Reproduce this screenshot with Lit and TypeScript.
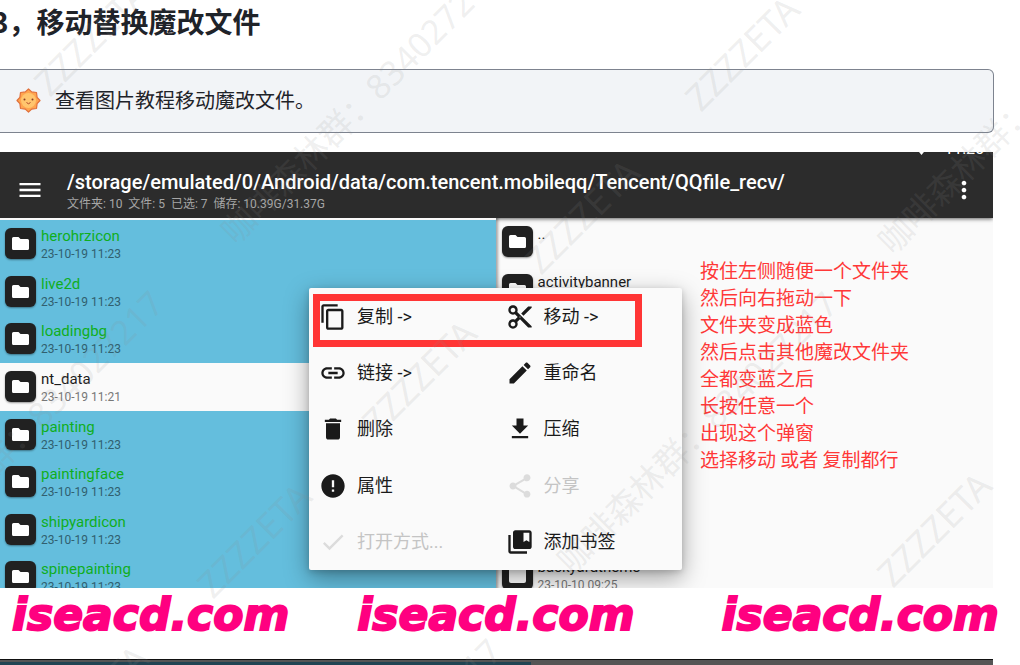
import { LitElement, html, css, svg } from "lit";
import { customElement, property } from "lit/decorators.js";

const ICONS: Record<string, string> = {
  menu: "M3 18h18v-2H3v2zm0-5h18v-2H3v2zm0-7v2h18V6H3z",
  more: "M12 8c1.1 0 2-.9 2-2s-.9-2-2-2-2 .9-2 2 .9 2 2 2zm0 2c-1.1 0-2 .9-2 2s.9 2 2 2 2-.9 2-2-.9-2-2-2zm0 6c-1.1 0-2 .9-2 2s.9 2 2 2 2-.9 2-2-.9-2-2-2z",
  copy: "M16 1H4c-1.1 0-2 .9-2 2v14h2V3h12V1zm3 4H8c-1.1 0-2 .9-2 2v14c0 1.1.9 2 2 2h11c1.1 0 2-.9 2-2V7c0-1.1-.9-2-2-2zm0 16H8V7h11v14z",
  cut: "M9.64 7.64c.23-.5.36-1.05.36-1.64 0-2.21-1.79-4-4-4S2 3.79 2 6s1.79 4 4 4c.59 0 1.14-.13 1.64-.36L10 12l-2.36 2.36C7.14 14.13 6.59 14 6 14c-2.21 0-4 1.79-4 4s1.79 4 4 4 4-1.79 4-4c0-.59-.13-1.14-.36-1.64L12 14l7 7h3v-1L9.64 7.64zM6 8c-1.1 0-2-.89-2-2s.9-2 2-2 2 .89 2 2-.9 2-2 2zm0 12c-1.1 0-2-.89-2-2s.9-2 2-2 2 .89 2 2-.9 2-2 2zm6-7.5c-.28 0-.5-.22-.5-.5s.22-.5.5-.5.5.22.5.5-.22.5-.5.5zM19 3l-6 6 2 2 7-7V3z",
  link: "M3.9 12c0-1.71 1.39-3.1 3.1-3.1h4V7H7c-2.76 0-5 2.24-5 5s2.24 5 5 5h4v-1.9H7c-1.71 0-3.1-1.39-3.1-3.1zM8 13h8v-2H8v2zm9-6h-4v1.9h4c1.71 0 3.1 1.39 3.1 3.1s-1.39 3.1-3.1 3.1h-4V17h4c2.76 0 5-2.24 5-5s-2.24-5-5-5z",
  edit: "M3 17.25V21h3.75L17.81 9.94l-3.75-3.75L3 17.25zM20.71 7.04c.39-.39.39-1.02 0-1.41l-2.34-2.34c-.39-.39-1.02-.39-1.41 0l-1.83 1.83 3.75 3.75 1.83-1.83z",
  trash: "M6 19c0 1.1.9 2 2 2h8c1.1 0 2-.9 2-2V7H6v12zM19 4h-3.5l-1-1h-5l-1 1H5v2h14V4z",
  down: "M19 9h-4V3H9v6H5l7 7 7-7zM5 18v2h14v-2H5z",
  info: "M12 2C6.48 2 2 6.48 2 12s4.48 10 10 10 10-4.48 10-10S17.52 2 12 2zm1 15h-2v-2h2v2zm0-4h-2V7h2v6z",
  share: "M18 16.08c-.76 0-1.44.3-1.96.77L8.91 12.7c.05-.23.09-.46.09-.7s-.04-.47-.09-.7l7.05-4.11c.54.5 1.25.81 2.04.81 1.66 0 3-1.34 3-3s-1.34-3-3-3-3 1.34-3 3c0 .24.04.47.09.7L8.04 9.81C7.5 9.31 6.79 9 6 9c-1.66 0-3 1.34-3 3s1.34 3 3 3c.79 0 1.5-.31 2.04-.81l7.12 4.16c-.05.21-.08.43-.08.65 0 1.61 1.31 2.92 2.92 2.92 1.61 0 2.92-1.31 2.92-2.92s-1.31-2.92-2.92-2.92z",
  check: "M9 16.17L4.83 12l-1.42 1.41L9 19 21 7l-1.41-1.41z",
  bookmark: "M4 6H2v14c0 1.1.9 2 2 2h14v-2H4V6zM20 2H8c-1.1 0-2 .9-2 2v12c0 1.1.9 2 2 2h12c1.1 0 2-.9 2-2V4c0-1.1-.9-2-2-2zm0 10l-2.5-1.5L15 12V4h5v8z",
};

const icon = (name: string) => html`
  <svg class="icon" viewBox="0 0 24 24" aria-hidden="true"><path d=${ICONS[name]}></path></svg>
`;

interface Entry {
  name: string;
  date?: string;
  selected?: boolean;
}

const LEFT: Entry[] = [
  { name: "herohrzicon", date: "23-10-19 11:23", selected: true },
  { name: "live2d", date: "23-10-19 11:23", selected: true },
  { name: "loadingbg", date: "23-10-19 11:23", selected: true },
  { name: "nt_data", date: "23-10-19 11:21" },
  { name: "painting", date: "23-10-19 11:23", selected: true },
  { name: "paintingface", date: "23-10-19 11:23", selected: true },
  { name: "shipyardicon", date: "23-10-19 11:23", selected: true },
  { name: "spinepainting", date: "23-10-19 11:23", selected: true },
];

const ACTIONS = [
  { icon: "copy", label: "复制 ->" },
  { icon: "cut", label: "移动 ->" },
  { icon: "link", label: "链接 ->" },
  { icon: "edit", label: "重命名" },
  { icon: "trash", label: "删除" },
  { icon: "down", label: "压缩" },
  { icon: "info", label: "属性" },
  { icon: "share", label: "分享", off: true },
  { icon: "check", label: "打开方式...", off: true },
  { icon: "bookmark", label: "添加书签" },
];

const STEPS = [
  "按住左侧随便一个文件夹",
  "然后向右拖动一下",
  "文件夹变成蓝色",
  "然后点击其他魔改文件夹",
  "全都变蓝之后",
  "长按任意一个",
  "出现这个弹窗",
  "选择移动 或者 复制都行",
];

const NAME_MARKS = [
  [50, 98],
  [701, 113],
  [541, 276],
  [378, 437],
  [213, 600],
  [893, 589],
  [50, 762],
];
const GROUP_MARKS = [
  [236, 246],
  [893, 256],
  [572, 575],
  [-102, 574],
  [236, 922],
];

@customElement("file-row")
export class FileRow extends LitElement {
  @property() name = "";
  @property() date = "";
  @property({ type: Boolean, reflect: true }) selected = false;
  @property() kind = "folder";

  static styles = css`
    :host {
      display: flex;
      gap: 5px;
      padding: 8px 5px 0;
      box-sizing: border-box;
      overflow: hidden;
      color: #1c1c1c;
      font-family: Roboto, "Noto Sans CJK SC", sans-serif;
    }
    :host([selected]) {
      background: #64bedd;
    }
    .tile {
      flex: none;
      width: 31px;
      height: 31px;
      border-radius: 6px;
      background: #212121;
      box-shadow: 0 1px 2px rgba(0, 0, 0, 0.4);
    }
    .text {
      display: flex;
      flex-direction: column;
    }
    .name {
      font-size: 15px;
      line-height: 16px;
    }
    .date {
      font-size: 12px;
      line-height: 20px;
      color: #777;
    }
    :host([selected]) .name {
      color: #0fae1e;
    }
    :host([selected]) .date {
      color: #31606f;
    }
  `;

  render() {
    return html`
      <svg class="tile" viewBox="0 0 31 31" aria-hidden="true">
        ${this.kind === "folder"
          ? svg`<path fill="#fff" d="M8.500 9H13.500L15.500 11H22.500Q24 11 24 12.500V20.500Q24 22 22.500 22H8.500Q7 22 7 20.500V10.500Q7 9 8.500 9Z"></path>`
          : svg`<rect fill="#fff" x="7" y="6" width="17" height="18" rx="2"></rect>`}
      </svg>
      <div class="text">
        <span class="name">${this.name}</span>
        ${this.date ? html`<span class="date">${this.date}</span>` : null}
      </div>
    `;
  }
}

@customElement("action-menu")
export class ActionMenu extends LitElement {
  static styles = css`
    :host {
      display: block;
      background: #fafafa;
      border-radius: 2px;
      box-shadow: 0 8px 24px rgba(0, 0, 0, 0.36), 0 2px 6px rgba(0, 0, 0, 0.16);
    }
    .grid {
      display: grid;
      grid-template-columns: 1fr 1fr;
      grid-template-rows: repeat(5, 1fr);
      height: 282px;
    }
    .action {
      display: flex;
      align-items: center;
      gap: 10px;
      padding: 1px 0 0 10px;
      border: 0;
      background: none;
      color: #1a1a1a;
      font: 18px/24px Roboto, "Noto Sans CJK SC", sans-serif;
      text-align: left;
    }
    .action:disabled {
      color: #c4c4c4;
    }
    .icon {
      flex: none;
      width: 28px;
      height: 28px;
      fill: currentColor;
    }
    .action:disabled .icon {
      color: #dcdcdc;
    }
    .frame {
      position: absolute;
      top: 6px;
      left: 4px;
      right: 40px;
      height: 53px;
      box-sizing: border-box;
      border: 7px solid #ff3535;
      pointer-events: none;
    }
  `;

  render() {
    return html`
      <div class="grid" role="menu">
        ${ACTIONS.map(
          (a) => html`
            <button class="action" role="menuitem" ?disabled=${a.off}>
              ${icon(a.icon)}<span>${a.label}</span>
            </button>
          `
        )}
      </div>
      <div class="frame"></div>
    `;
  }
}

@customElement("app-root")
export class AppRoot extends LitElement {
  static styles = css`
    :host {
      display: block;
      position: relative;
      height: 100vh;
      overflow: hidden;
      background: #fff;
      font-family: "Noto Sans CJK SC", sans-serif;
      color: #1f2329;
    }
    .article {
      margin-right: 26px;
    }
    .title {
      margin: 0 0 0 -8px;
      padding: 1px 0 28px;
      font-size: 28px;
      line-height: 40px;
      font-weight: 700;
    }
    .callout {
      display: flex;
      align-items: center;
      gap: 14px;
      box-sizing: border-box;
      padding: 15px 16px 17px;
      border: 1px solid #7d838f;
      border-left: 0;
      border-radius: 0 6px 6px 0;
      background: #f2f4f7;
      font-size: 20px;
      line-height: 30px;
    }
    .sun {
      flex: none;
      width: 25px;
      height: 25px;
    }
    .callout p {
      margin: 0;
    }
    .shot {
      position: relative;
      display: flex;
      flex-direction: column;
      height: 436px;
      margin: 19px 1px 0 0;
      overflow: hidden;
      background: #fafafa;
    }
    .status {
      display: flex;
      align-items: flex-end;
      justify-content: flex-end;
      gap: 16px;
      height: 5px;
      padding-right: 9px;
      overflow: hidden;
      color: #fff;
      font: 16px/16px Roboto, sans-serif;
    }
    .status svg {
      width: 13px;
      height: 10px;
      margin-bottom: 2px;
      fill: #fff;
    }
    .head {
      position: relative;
      background: #2c2c2c;
      box-shadow: 0 1px 4px rgba(0, 0, 0, 0.6);
    }
    .bar {
      display: flex;
      align-items: center;
      height: 61px;
      box-sizing: border-box;
      padding: 5px 15px 0 16px;
      color: #fff;
    }
    .path {
      flex: 1;
      padding: 2px 0 0 23px;
      font-family: Roboto, "Noto Sans CJK SC", sans-serif;
    }
    .path h2 {
      margin: 0;
      font-size: 20px;
      line-height: 26px;
      font-weight: 500;
    }
    .path p {
      margin: 0;
      font-size: 12px;
      line-height: 18px;
      color: #a6a6a6;
    }
    .tool {
      display: flex;
      padding: 0;
      border: 0;
      background: none;
      color: #fff;
    }
    .icon {
      width: 28px;
      height: 28px;
      fill: currentColor;
    }
    .panes {
      flex: 1;
      display: grid;
      grid-template-columns: calc(50% - 1px) 1fr;
      min-height: 0;
    }
    .pane {
      display: grid;
      grid-template-rows: repeat(8, 1fr);
      height: 381px;
    }
    .left {
      position: relative;
      padding-top: 2px;
      background: #fafafa;
    }
    .right {
      padding-left: 1px;
      box-shadow: inset 4px 0 3px -2px rgba(0, 0, 0, 0.35);
    }
    .last {
      grid-row: 8;
    }
    .menu {
      position: absolute;
      top: 136px;
      left: 309px;
      width: 373px;
    }
    .steps {
      position: absolute;
      top: 104px;
      left: 700px;
      margin: 0;
      padding: 0;
      list-style: none;
      color: #ff3838;
      font-size: 19px;
      line-height: 27px;
      white-space: nowrap;
    }
    .sites {
      display: flex;
      gap: 68px;
      height: 71px;
      padding-left: 12px;
      box-sizing: border-box;
    }
    .site {
      color: #ff0080;
      font: italic 700 44px/54px "DejaVu Sans", sans-serif;
      -webkit-text-stroke: 2px #ff0080;
      text-decoration: none;
      white-space: nowrap;
    }
    .site:last-child {
      margin-left: 19px;
    }
    .next {
      display: grid;
      grid-template-columns: 531px 1fr;
      height: 20px;
      margin-right: 1px;
      border-top: 1px solid #111;
      background: #555;
    }
    .next .dim {
      margin-top: 2px;
      background: #214453;
    }
    .marks {
      position: absolute;
      inset: 0;
      width: 100%;
      height: 100%;
      overflow: hidden;
      pointer-events: none;
      fill: rgba(140, 140, 140, 0.14);
      font: 34px "Noto Sans", "Noto Sans CJK SC", sans-serif;
    }
    .mark-name {
      font-size: 36px;
    }
  `;

  render() {
    return html`
      <main class="article">
        <h1 class="title">3，移动替换魔改文件</h1>
        <aside class="callout">
          <svg class="sun" viewBox="0 0 25 25" aria-hidden="true">
            <path
              d="M12.500 1L15.700 3.900L20.500 4.500L21.100 9.300L24 12.500L21.100 15.700L20.500 20.500L15.700 21.100L12.500 24L9.300 21.100L4.500 20.500L3.900 15.700L1 12.500L3.900 9.300L4.500 4.500L9.300 3.900Z"
              fill="#ffa44e" stroke="#e0703c" stroke-width="1.200" stroke-linejoin="round"
            ></path>
            <circle cx="12.500" cy="12.500" r="7.500" fill="#ffc56e"></circle>
            <circle cx="8.500" cy="11.500" r="1" fill="#8a3c24"></circle>
            <circle cx="16.500" cy="11.500" r="1" fill="#8a3c24"></circle>
            <path d="M10.500 14.500Q12.500 17 14.500 14.500" fill="none" stroke="#b1472b"></path>
          </svg>
          <p>查看图片教程移动魔改文件。</p>
        </aside>

        <section class="shot">
          <header class="head">
            <div class="status">
              <svg viewBox="0 0 13 10" aria-hidden="true"><path d="M0 2Q6.500 -2 13 2L6.500 10Z"></path></svg>
              <time>11:25</time>
            </div>
            <div class="bar">
              <button class="tool" aria-label="菜单">${icon("menu")}</button>
              <div class="path">
                <h2>/storage/emulated/0/Android/data/com.tencent.mobileqq/Tencent/QQfile_recv/</h2>
                <p>文件夹: 10&nbsp; 文件: 5&nbsp; 已选: 7&nbsp; 储存: 10.39G/31.37G</p>
              </div>
              <button class="tool" aria-label="更多">${icon("more")}</button>
            </div>
          </header>
          <div class="panes">
            <div class="pane left">
              ${LEFT.map(
                (e) => html`<file-row .name=${e.name} .date=${e.date ?? ""} ?selected=${e.selected}></file-row>`
              )}
            </div>
            <div class="pane right">
              <file-row name=".."></file-row>
              <file-row name="activitybanner"></file-row>
              <file-row class="last" name="backyardtheme" date="23-10-10 09:25" kind="file"></file-row>
            </div>
          </div>
          <ul class="steps">
            ${STEPS.map((s) => html`<li>${s}</li>`)}
          </ul>
          <action-menu class="menu"></action-menu>
        </section>

        <nav class="sites">
          ${[0, 1, 2].map(() => html`<a class="site" href="#">iseacd.com</a>`)}
        </nav>
        <div class="next"><div class="dim"></div></div>
      </main>
      <svg class="marks" aria-hidden="true">
        ${NAME_MARKS.map(
          ([x, y]) => svg`<text class="mark-name" transform="translate(${x} ${y}) rotate(-45)">ZZZZETA</text>`
        )}
        ${GROUP_MARKS.map(
          ([x, y]) => svg`<text transform="translate(${x} ${y}) rotate(-45)">咖啡森林群：834027217</text>`
        )}
      </svg>
    `;
  }
}
